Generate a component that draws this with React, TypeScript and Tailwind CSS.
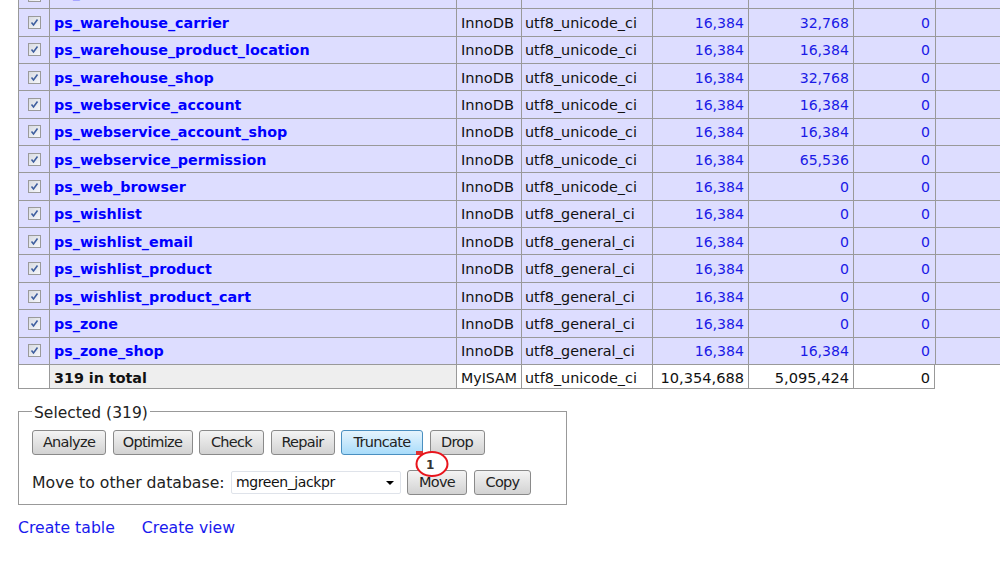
const rows = [
  ["ps_warehouse_carrier", "utf8_unicode_ci", "16,384", "32,768"],
  ["ps_warehouse_product_location", "utf8_unicode_ci", "16,384", "16,384"],
  ["ps_warehouse_shop", "utf8_unicode_ci", "16,384", "32,768"],
  ["ps_webservice_account", "utf8_unicode_ci", "16,384", "16,384"],
  ["ps_webservice_account_shop", "utf8_unicode_ci", "16,384", "16,384"],
  ["ps_webservice_permission", "utf8_unicode_ci", "16,384", "65,536"],
  ["ps_web_browser", "utf8_unicode_ci", "16,384", "0"],
  ["ps_wishlist", "utf8_general_ci", "16,384", "0"],
  ["ps_wishlist_email", "utf8_general_ci", "16,384", "0"],
  ["ps_wishlist_product", "utf8_general_ci", "16,384", "0"],
  ["ps_wishlist_product_cart", "utf8_general_ci", "16,384", "0"],
  ["ps_zone", "utf8_general_ci", "16,384", "0"],
  ["ps_zone_shop", "utf8_general_ci", "16,384", "16,384"],
];

const gridCols = "grid grid-cols-[31px_407px_65px_131px_96px_105px_82px_1fr]";

function Check() {
  return (
    <span className="flex h-[13px] w-[13px] items-center justify-center border border-[#9a9a9a] bg-gradient-to-br from-[#d8dbe2] to-[#f6f7fa]">
      <svg width="9" height="9" viewBox="0 0 9 9" fill="none">
        <path d="M1.5 4.5 L3.5 7 L7.5 1.5" stroke="#3f5f9f" strokeWidth="1.6" />
      </svg>
    </span>
  );
}

function Row({ name, coll, a, b, h, pad = "pt-[1px]" }: { name: string; coll: string; a: string; b: string; h: string; pad?: string }) {
  const cell = "border-l border-[#999] flex items-center";
  const text = `${cell} ${pad} leading-[18px]`;
  return (
    <div className={`${gridCols} ${h} bg-[#ddddff] border-b border-[#999]`}>
      <div className={`${cell} justify-center`}>
        <Check />
      </div>
      <div className={`${text} pl-[4px] text-[14.3px] font-bold text-[#0000ff]`}>{name}</div>
      <div className={`${text} pl-[4px]`}>InnoDB</div>
      <div className={`${text} pl-[3px] text-[14.35px]`}>{coll}</div>
      <div className={`${text} justify-end pr-[4px] text-[14.1px] text-[#1a1ae6]`}>{a}</div>
      <div className={`${text} justify-end pr-[4px] text-[14.1px] text-[#1a1ae6]`}>{b}</div>
      <div className={`${text} justify-end pr-[5px] text-[14.1px] text-[#1a1ae6]`}>0</div>
      <div className={cell}></div>
    </div>
  );
}

function Btn({ label, w, active }: { label: string; w: string; active?: boolean }) {
  return (
    <button
      className={`${w} h-[25px] shrink-0 rounded-[3px] border pt-[1px] text-[14.5px] tracking-[-0.7px] text-[#222] ${
        active
          ? "border-[#4a8fc0] bg-gradient-to-b from-[#e6f4fd] to-[#a8dcfa]"
          : "border-[#8a8a8a] bg-gradient-to-b from-[#f4f4f4] to-[#d2d2d2]"
      }`}
    >
      {label}
    </button>
  );
}

export default function App() {
  const total = "flex items-center border-l border-[#999] pt-[4px] leading-[18px]";
  return (
    <div className="relative h-[563px] w-[1000px] overflow-hidden bg-white font-['DejaVu_Sans',sans-serif] text-[14.6px] text-[#111]">
      <div className="-mt-[19px] ml-[18px]">
        <div className="border-t border-[#999]">
          <Row name="ps_warehouse" coll="utf8_unicode_ci" a="16,384" b="0" h="h-[27.4px]" pad="pb-[6px]" />
          {rows.map((r) => (
            <Row key={r[0]} name={r[0]} coll={r[1]} a={r[2]} b={r[3]} h="h-[27.35px]" />
          ))}
        </div>
        <div className="grid h-[24px] w-[917px] grid-cols-[31px_407px_65px_131px_96px_105px_82px] grid-rows-[23px] border-b border-r border-[#999]">
          <div className="border-l border-[#999]"></div>
          <div className={`${total} bg-[#eeeeee] pl-[4px] text-[14.3px] font-bold`}>319 in total</div>
          <div className={`${total} pl-[4px] text-[14.2px]`}>MyISAM</div>
          <div className={`${total} pl-[3px] text-[14.35px]`}>utf8_unicode_ci</div>
          <div className={`${total} justify-end pr-[4px]`}>10,354,688</div>
          <div className={`${total} justify-end pr-[4px]`}>5,095,424</div>
          <div className={`${total} justify-end pr-[5px]`}>0</div>
        </div>
      </div>

      <fieldset className="ml-[18px] mt-[11px] h-[105px] w-[549px] border border-[#999] pl-[13px] pr-0">
        <legend className="relative top-[2px] px-[2px] text-[15.5px] text-[#222]">Selected (319)</legend>
        <div className="mt-[7px] flex gap-[6.5px]">
          <Btn label="Analyze" w="w-[74px]" />
          <Btn label="Optimize" w="w-[80px]" />
          <Btn label="Check" w="w-[65px]" />
          <Btn label="Repair" w="w-[64px]" />
          <Btn label="Truncate" w="w-[82px]" active />
          <Btn label="Drop" w="w-[55px]" />
        </div>
        <div className="mt-[15px] flex items-center">
          <span className="w-[199px] text-[15.7px] text-[#222]">Move to other database:</span>
          <div className="flex h-[23px] w-[170px] items-center justify-between rounded-[2px] border border-[#dfe3ea] bg-white pl-[4px] pr-[6px] text-[14px] tracking-[-0.4px]">
            <span>mgreen_jackpr</span>
            <span className="h-0 w-0 border-x-[4px] border-t-[4px] border-x-transparent border-t-black"></span>
          </div>
          <div className="ml-[6px] flex gap-[7px]">
            <Btn label="Move" w="w-[60px]" />
            <Btn label="Copy" w="w-[57px]" />
          </div>
        </div>
      </fieldset>

      <div className="ml-[18px] mt-[11px] flex gap-[27px] text-[15.7px] text-[#1a1aee]">
        <span>Create table</span>
        <span>Create view</span>
      </div>

      <svg className="absolute left-[410px] top-[448px]" width="44" height="34" viewBox="0 0 44 34" fill="none">
        <path d="M6 3 L13 3 L13 7 L6 7 Z" fill="#e03030" />
        <ellipse cx="22" cy="16" rx="15.5" ry="12" fill="#fff" stroke="#e8141c" strokeWidth="2" />
      </svg>
      <span className="absolute left-[426px] top-[456px] text-[12px] font-bold text-[#333]">1</span>
    </div>
  );
}
